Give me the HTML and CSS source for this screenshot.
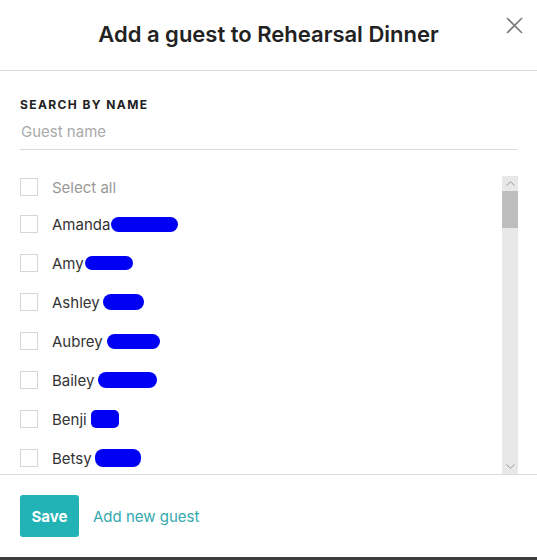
FILE: index.html
```html
<!DOCTYPE html>
<html>
<head>
<meta name="viewport" content="width=device-width, initial-scale=1">
<link rel="stylesheet" href="styles.css">
</head>
<body>

<div class="modal">
  <div class="modal-header">
    <h2 class="modal-title">Add a guest to Rehearsal Dinner</h2>
    <span class="close">
      <svg width="17" height="17" viewBox="0 0 17 17"><path d="M1 1 L16 16 M16 1 L1 16" stroke="#7a7a7a" stroke-width="1.6" fill="none"/></svg>
    </span>
  </div>

  <div class="search">
    <div class="search-label">SEARCH BY NAME</div>
    <input type="text" class="search-input" placeholder="Guest name">
  </div>

  <div class="guests">
    <ul class="guest-list">
      <li class="select-all"><span class="box"></span>Select all</li>
      <li><span class="box"></span>Amanda<span class="blot blot-amanda"></span></li>
      <li><span class="box"></span>Amy<span class="blot blot-amy"></span></li>
      <li><span class="box"></span>Ashley<span class="blot blot-ashley"></span></li>
      <li><span class="box"></span>Aubrey<span class="blot blot-aubrey"></span></li>
      <li><span class="box"></span>Bailey<span class="blot blot-bailey"></span></li>
      <li><span class="box"></span>Benji<span class="blot blot-benji"></span></li>
      <li><span class="box"></span>Betsy<span class="blot blot-betsy"></span></li>
    </ul>
    <!-- fake scrollbar -->
    <div class="scrollbar">
      <span class="arrow">
        <svg width="9" height="5" viewBox="0 0 9 5"><path d="M0.5 4.5 L4.5 0.8 L8.5 4.5" stroke="#999" fill="none"/></svg>
      </span>
      <span class="thumb"></span>
      <span class="track"></span>
      <span class="arrow">
        <svg width="9" height="5" viewBox="0 0 9 5"><path d="M0.5 0.5 L4.5 4.2 L8.5 0.5" stroke="#999" fill="none"/></svg>
      </span>
    </div>
  </div>

  <div class="modal-footer">
    <span class="saveBtn">Save</span>
    <span class="addLink">Add new guest</span>
  </div>
</div>

</body>
</html>
```

FILE: styles.css
```css
body {
  margin: 0;
  background: #3d3d3d;
  font-family: Inter, Lato, sans-serif;
}

* {
  box-sizing: border-box;
}

/* The dialog itself */
.modal {
  height: 557px;
  background: #fff;
  display: flex;
  flex-direction: column;
}

.modal-header {
  position: relative;
  height: 71px;
  border-bottom: 1px solid #dcdcdc;
  display: flex;
  align-items: center;
  justify-content: center;
}

.modal-title {
  margin: 0 0 2px 0;
  font-size: 22px;
  font-weight: 600;
  color: #222;
}

.close {
  position: absolute;
  top: 17px;
  right: 14px;
  line-height: 0;
  cursor: pointer;
}

/* Search box */
.search {
  padding: 26px 20px 0 20px;
}

.search-label {
  font-size: 12px;
  font-weight: 700;
  letter-spacing: 1.4px;
  color: #222;
}

.search-input {
  display: block;
  width: 100%;
  margin-top: 6px;
  padding: 4px 1px 8px 1px;
  border: none;
  border-bottom: 1px solid #d8d8d8;
  font-family: inherit;
  font-size: 15px;
  outline: none;
}

.search-input::placeholder {
  color: #aaa;
}

/* Guest list */
.guests {
  margin-top: 20px;
  height: 306px;
  display: flex;
  padding-right: 19px;
  border-bottom: 1px solid #dcdcdc;
  overflow: hidden;
}

.guest-list {
  flex: 1;
  margin: 0;
  padding: 0 0 0 20px;
  list-style: none;
}

.guest-list li {
  height: 39px;
  display: flex;
  align-items: center;
  font-size: 15px;
  color: #333;
}

.guest-list li.select-all {
  height: 35px;
  color: #999;
}

.box {
  width: 18px;
  height: 18px;
  border: 1px solid #d6d6d6;
  margin-right: 14px;
  flex-shrink: 0;
}

/* redacted surnames */
.blot {
  display: inline-block;
  background: #0000f5;
  border-radius: 8px;
}
.blot-amanda { width: 67px; height: 15px; margin-left: 1px; }
.blot-amy { width: 48px; height: 14px; margin-left: 1px; }
.blot-ashley { width: 41px; height: 16px; margin-left: 3px; }
.blot-aubrey { width: 53px; height: 15px; margin-left: 4px; }
.blot-bailey { width: 59px; height: 16px; margin-left: 4px; }
.blot-benji { width: 28px; height: 18px; margin-left: 4px; border-radius: 5px; }
.blot-betsy { width: 46px; height: 18px; margin-left: 3px; }

.scrollbar {
  width: 16px;
  margin-top: 6px;
  background: #e8e8e8;
  display: flex;
  flex-direction: column;
}

.arrow {
  height: 15px;
  display: flex;
  align-items: center;
  justify-content: center;
}

.thumb {
  height: 37px;
  background: #bdbdbd;
}

.track {
  flex: 1;
}

/* Footer */
.modal-footer {
  padding: 20px;
  display: flex;
  align-items: center;
}

.saveBtn {
  width: 59px;
  height: 42px;
  background: #22b3b6;
  color: #fff;
  border-radius: 3px;
  font-size: 15px;
  font-weight: 700;
  display: flex;
  align-items: center;
  justify-content: center;
  cursor: pointer;
}

.addLink {
  margin-left: 14px;
  font-size: 15px;
  color: #33a9ad;
  cursor: pointer;
}
```
